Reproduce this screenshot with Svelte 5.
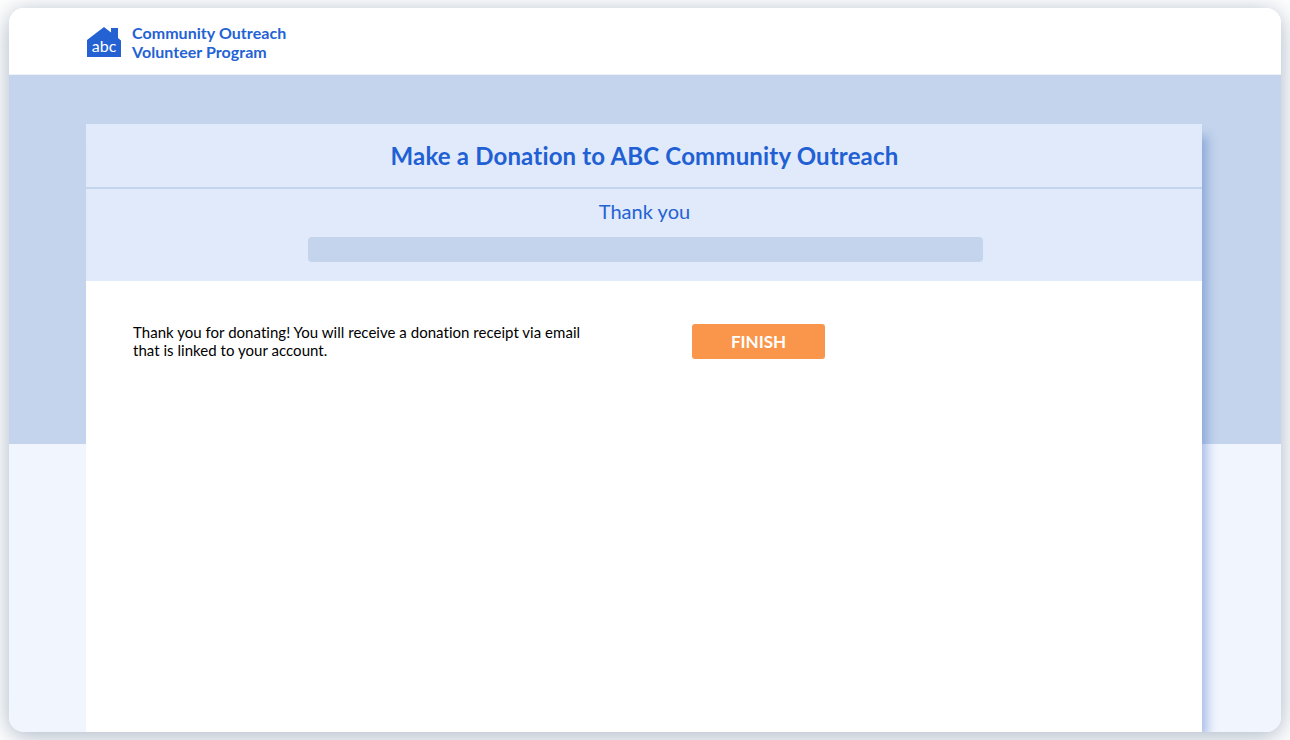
<script>
	const title = 'Make a Donation to ABC Community Outreach';
</script>

<div class="page">
	<div class="window">
		<header class="topbar">
			<svg class="logo" width="34" height="30" viewBox="0 0 34 30" aria-hidden="true">
				<path d="M0 13 L17 0 L24 5.500 L24 1 L31 1 L31 11 L34 13.500 L34 30 L0 30 Z" fill="#2462d4" />
				<text x="17" y="24.500" text-anchor="middle" class="logo-text">abc</text>
			</svg>
			<div class="brand">
				<span>Community Outreach</span>
				<span>Volunteer Program</span>
			</div>
		</header>

		<main class="hero">
			<section class="card">
				<div class="card-head">
					<h1>{title}</h1>
				</div>
				<div class="step">
					<h2>Thank you</h2>
					<div class="progress"></div>
				</div>
				<div class="card-body">
					<p>Thank you for donating! You will receive a donation receipt via email that is linked to your account.</p>
					<button type="button">FINISH</button>
				</div>
			</section>
		</main>
	</div>
</div>

<style>
	:global(body) {
		background: #fff;
		font-family: "Lato", "Open Sans", sans-serif;
	}

	.page {
		height: 740px;
		box-sizing: border-box;
		padding: 8px 9px;
		overflow: hidden;
	}

	.window {
		height: 724px;
		display: flex;
		flex-direction: column;
		border-radius: 15px;
		overflow: hidden;
		box-shadow: 0 4px 24px rgba(85, 110, 140, 0.5);
	}

	.topbar {
		height: 66px;
		flex: none;
		display: flex;
		align-items: center;
		gap: 11px;
		padding-left: 78px;
		background: #fff;
		border-bottom: 1px solid #eef1f6;
	}

	.logo {
		margin-top: 2px;
	}

	.logo-text {
		font-family: "Lato", sans-serif;
		font-size: 16px;
		fill: #fff;
	}

	.brand {
		display: flex;
		flex-direction: column;
		margin-top: 1px;
		color: #2462d4;
		font-size: 16px;
		font-weight: 700;
		line-height: 19px;
		letter-spacing: 0.05px;
	}

	.hero {
		flex: 1;
		min-height: 0;
		padding: 49px 79px 0 77px;
		background: linear-gradient(#c3d4ec 369px, #f1f5fe 369px);
	}

	.card {
		height: 100%;
		display: flex;
		flex-direction: column;
		background: #fff;
		box-shadow: 8px 9px 10px -3px rgba(50, 95, 190, 0.38);
	}

	.card-head {
		height: 63px;
		display: flex;
		align-items: center;
		justify-content: center;
		background: #e0eafa;
		border-bottom: 2px solid #c3d4ec;
	}

	h1 {
		margin: 0 0 0 1px;
		color: #2160d4;
		font-size: 24px;
		font-weight: 700;
		letter-spacing: 0.17px;
	}

	.step {
		height: 92px;
		box-sizing: border-box;
		padding-top: 10px;
		display: flex;
		flex-direction: column;
		align-items: center;
		background: #e0eafa;
	}

	h2 {
		margin: 0 0 13px 1px;
		color: #2462d4;
		font-size: 20px;
		font-weight: 400;
		line-height: 25px;
		letter-spacing: 0.03px;
	}

	.progress {
		width: 675px;
		height: 25px;
		margin-left: 2px;
		border-radius: 4px;
		background: #c3d4ec;
	}

	.card-body {
		display: flex;
		align-items: flex-start;
		padding: 42px 47px;
	}

	p {
		width: 470px;
		margin: 0 89px 0 0;
		color: #000;
		font-size: 15px;
		line-height: 18px;
		letter-spacing: 0.03px;
	}

	button {
		width: 133px;
		height: 35px;
		margin-top: 1px;
		border: none;
		border-radius: 3px;
		background: #f9964b;
		color: #fff;
		font-family: inherit;
		font-size: 17px;
		font-weight: 700;
		cursor: pointer;
	}
</style>
